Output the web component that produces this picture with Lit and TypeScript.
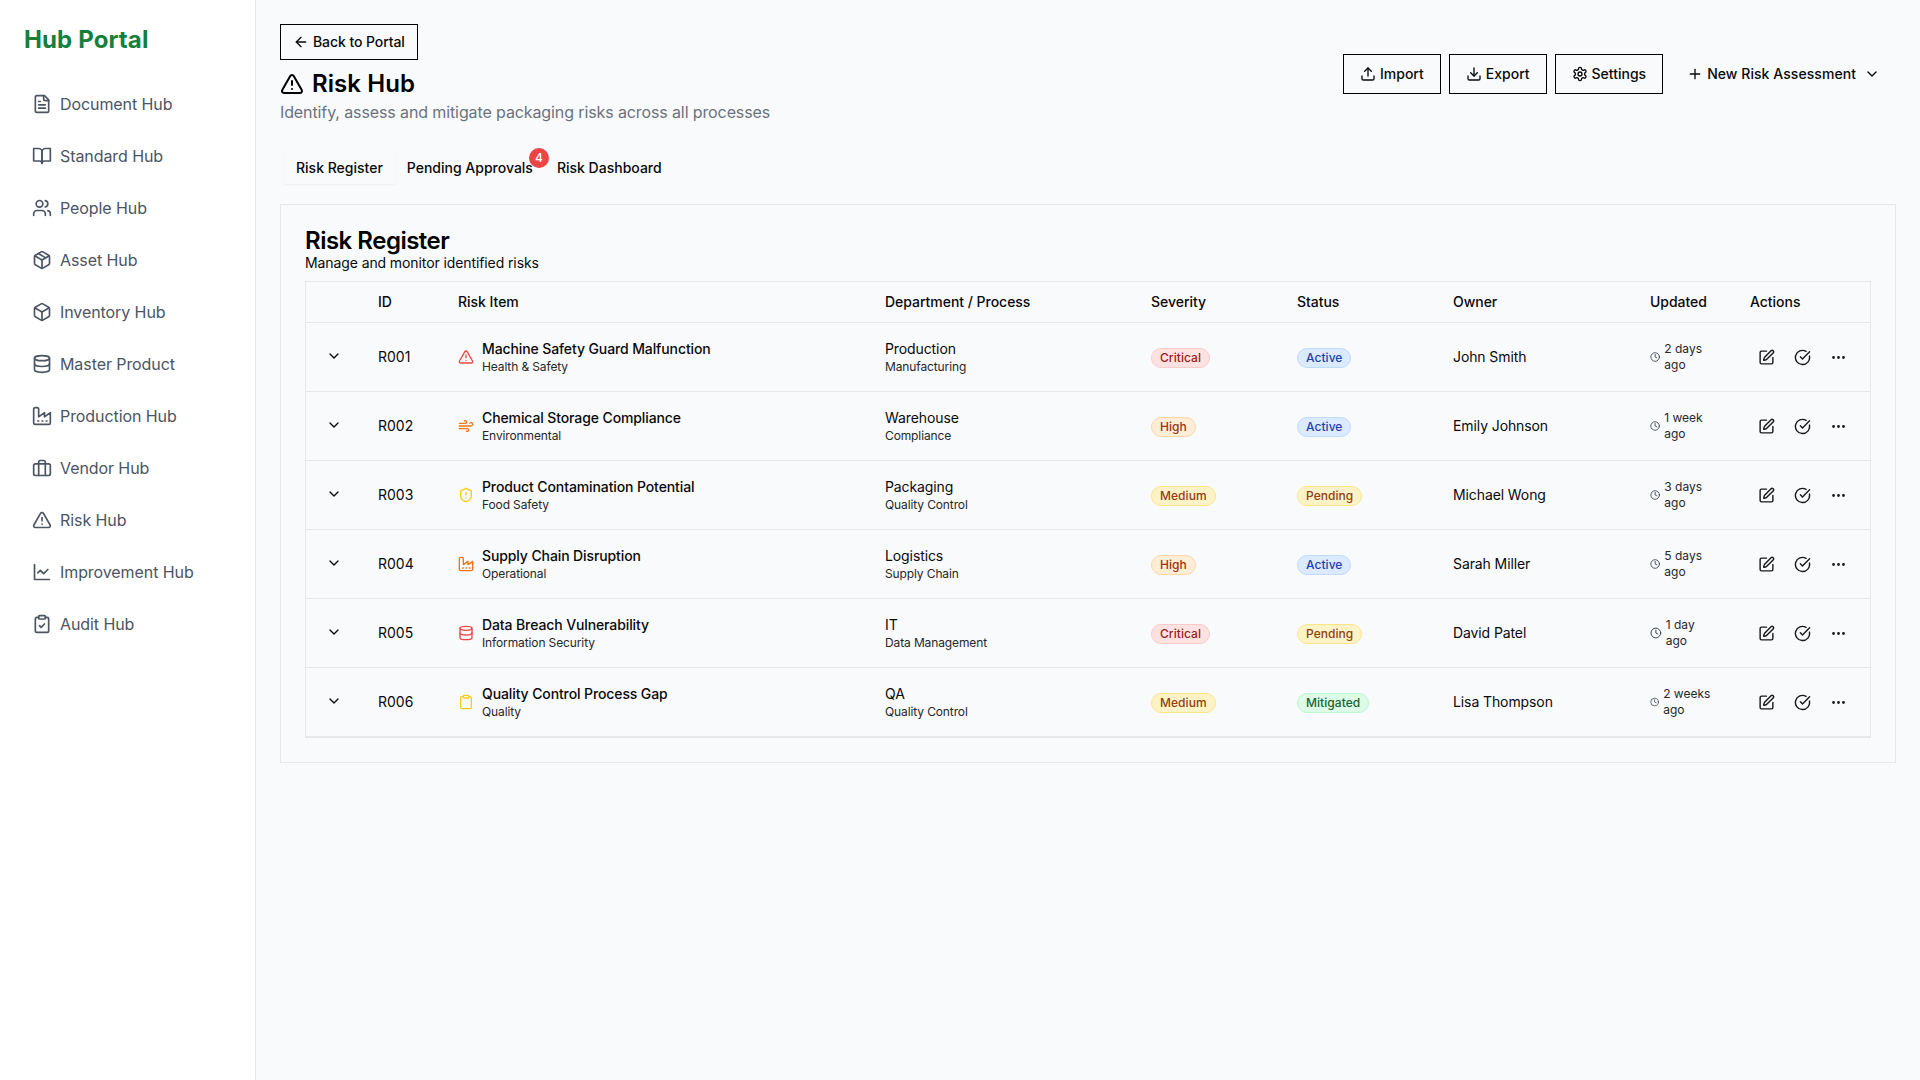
import { LitElement, html, css, svg } from "lit";
import { customElement } from "lit/decorators.js";

const icons: Record<string, unknown> = {
  file: svg`<path d="M15 2H6a2 2 0 0 0-2 2v16a2 2 0 0 0 2 2h12a2 2 0 0 0 2-2V7Z"/><path d="M14 2v4a2 2 0 0 0 2 2h4"/><path d="M10 9H8"/><path d="M16 13H8"/><path d="M16 17H8"/>`,
  book: svg`<path d="M2 3h6a4 4 0 0 1 4 4v14a3 3 0 0 0-3-3H2z"/><path d="M22 3h-6a4 4 0 0 0-4 4v14a3 3 0 0 1 3-3h7z"/>`,
  users: svg`<path d="M16 21v-2a4 4 0 0 0-4-4H6a4 4 0 0 0-4 4v2"/><circle cx="9" cy="7" r="4"/><path d="M22 21v-2a4 4 0 0 0-3-3.87"/><path d="M16 3.13a4 4 0 0 1 0 7.75"/>`,
  pack: svg`<path d="m7.5 4.27 9 5.15"/><path d="M21 8a2 2 0 0 0-1-1.73l-7-4a2 2 0 0 0-2 0l-7 4A2 2 0 0 0 3 8v8a2 2 0 0 0 1 1.73l7 4a2 2 0 0 0 2 0l7-4A2 2 0 0 0 21 16Z"/><path d="m3.3 7 8.7 5 8.7-5"/><path d="M12 22V12"/>`,
  box: svg`<path d="M21 8a2 2 0 0 0-1-1.73l-7-4a2 2 0 0 0-2 0l-7 4A2 2 0 0 0 3 8v8a2 2 0 0 0 1 1.73l7 4a2 2 0 0 0 2 0l7-4A2 2 0 0 0 21 16Z"/><path d="m3.3 7 8.7 5 8.7-5"/><path d="M12 22V12"/>`,
  db: svg`<ellipse cx="12" cy="5" rx="9" ry="3"/><path d="M3 5V19A9 3 0 0 0 21 19V5"/><path d="M3 12A9 3 0 0 0 21 12"/>`,
  factory: svg`<path d="M2 20a2 2 0 0 0 2 2h16a2 2 0 0 0 2-2V8l-7 5V8l-7 5V4a2 2 0 0 0-2-2H4a2 2 0 0 0-2 2Z"/><path d="M17 18h1"/><path d="M12 18h1"/><path d="M7 18h1"/>`,
  case: svg`<rect x="2" y="7" width="20" height="14" rx="2" ry="2"/><path d="M16 21V5a2 2 0 0 0-2-2h-4a2 2 0 0 0-2 2v16"/>`,
  alert: svg`<path d="m21.73 18-8-14a2 2 0 0 0-3.48 0l-8 14A2 2 0 0 0 4 21h16a2 2 0 0 0 1.73-3"/><path d="M12 9v4"/><path d="M12 17h.01"/>`,
  chart: svg`<path d="M3 3v18h18"/><path d="m19 9-5 5-4-4-3 3"/>`,
  audit: svg`<rect x="8" y="2" width="8" height="4" rx="1" ry="1"/><path d="M16 4h2a2 2 0 0 1 2 2v14a2 2 0 0 1-2 2H6a2 2 0 0 1-2-2V6a2 2 0 0 1 2-2h2"/><path d="m9 14 2 2 4-4"/>`,
  clip: svg`<rect x="8" y="2" width="8" height="4" rx="1" ry="1"/><path d="M16 4h2a2 2 0 0 1 2 2v14a2 2 0 0 1-2 2H6a2 2 0 0 1-2-2V6a2 2 0 0 1 2-2h2"/>`,
  back: svg`<path d="m12 19-7-7 7-7"/><path d="M19 12H5"/>`,
  upload: svg`<path d="M21 15v4a2 2 0 0 1-2 2H5a2 2 0 0 1-2-2v-4"/><polyline points="17 8 12 3 7 8"/><line x1="12" x2="12" y1="3" y2="15"/>`,
  download: svg`<path d="M21 15v4a2 2 0 0 1-2 2H5a2 2 0 0 1-2-2v-4"/><polyline points="7 10 12 15 17 10"/><line x1="12" x2="12" y1="15" y2="3"/>`,
  gear: svg`<path d="M12.22 2h-.44a2 2 0 0 0-2 2v.18a2 2 0 0 1-1 1.73l-.43.25a2 2 0 0 1-2 0l-.15-.08a2 2 0 0 0-2.73.73l-.22.38a2 2 0 0 0 .73 2.73l.15.1a2 2 0 0 1 1 1.72v.51a2 2 0 0 1-1 1.74l-.15.09a2 2 0 0 0-.73 2.73l.22.38a2 2 0 0 0 2.73.73l.15-.08a2 2 0 0 1 2 0l.43.25a2 2 0 0 1 1 1.73V20a2 2 0 0 0 2 2h.44a2 2 0 0 0 2-2v-.18a2 2 0 0 1 1-1.73l.43-.25a2 2 0 0 1 2 0l.15.08a2 2 0 0 0 2.73-.73l.22-.39a2 2 0 0 0-.73-2.73l-.15-.08a2 2 0 0 1-1-1.74v-.5a2 2 0 0 1 1-1.74l.15-.09a2 2 0 0 0 .73-2.73l-.22-.38a2 2 0 0 0-2.73-.73l-.15.08a2 2 0 0 1-2 0l-.43-.25a2 2 0 0 1-1-1.73V4a2 2 0 0 0-2-2z"/><circle cx="12" cy="12" r="3"/>`,
  plus: svg`<path d="M5 12h14"/><path d="M12 5v14"/>`,
  chevron: svg`<path d="m6 9 6 6 6-6"/>`,
  wind: svg`<path d="M17.7 7.7a2.5 2.5 0 1 1 1.8 4.3H2"/><path d="M9.6 4.6A2 2 0 1 1 11 8H2"/><path d="M12.6 19.4A2 2 0 1 0 14 16H2"/>`,
  shield: svg`<path d="M20 13c0 5-3.5 7.5-7.66 8.95a1 1 0 0 1-.67-.01C7.5 20.5 4 18 4 13V6a1 1 0 0 1 1-1c2 0 4.5-1.2 6.24-2.72a1.17 1.17 0 0 1 1.52 0C14.51 3.81 17 5 19 5a1 1 0 0 1 1 1z"/><path d="M12 8v4"/><path d="M12 16h.01"/>`,
  clock: svg`<circle cx="12" cy="12" r="10"/><polyline points="12 6 12 12 16 14"/>`,
  edit: svg`<path d="M12 3H5a2 2 0 0 0-2 2v14a2 2 0 0 0 2 2h14a2 2 0 0 0 2-2v-7"/><path d="M18.375 2.625a1 1 0 0 1 3 3l-9.013 9.014a2 2 0 0 1-.853.505l-2.873.84a.5.5 0 0 1-.62-.62l.84-2.873a2 2 0 0 1 .506-.852z"/>`,
  check: svg`<path d="M21.801 10A10 10 0 1 1 17 3.335"/><path d="m9 11 3 3L22 4"/>`,
  dots: svg`<circle cx="12" cy="12" r="1"/><circle cx="19" cy="12" r="1"/><circle cx="5" cy="12" r="1"/>`,
};

const icon = (name: string, cls = "") =>
  html`<svg class="ic ${cls}" viewBox="0 0 24 24" fill="none" stroke="currentColor" stroke-width="2" stroke-linecap="round" stroke-linejoin="round">${icons[name]}</svg>`;

const navItems = [
  ["file", "Document Hub"],
  ["book", "Standard Hub"],
  ["users", "People Hub"],
  ["pack", "Asset Hub"],
  ["box", "Inventory Hub"],
  ["db", "Master Product"],
  ["factory", "Production Hub"],
  ["case", "Vendor Hub"],
  ["alert", "Risk Hub"],
  ["chart", "Improvement Hub"],
  ["audit", "Audit Hub"],
];

const risks = [
  { id: "R001", icon: "alert", tone: "red", name: "Machine Safety Guard Malfunction", cat: "Health & Safety", dept: "Production", proc: "Manufacturing", sev: "Critical", status: "Active", owner: "John Smith", updated: "2 days ago" },
  { id: "R002", icon: "wind", tone: "orange", name: "Chemical Storage Compliance", cat: "Environmental", dept: "Warehouse", proc: "Compliance", sev: "High", status: "Active", owner: "Emily Johnson", updated: "1 week ago" },
  { id: "R003", icon: "shield", tone: "yellow", name: "Product Contamination Potential", cat: "Food Safety", dept: "Packaging", proc: "Quality Control", sev: "Medium", status: "Pending", owner: "Michael Wong", updated: "3 days ago" },
  { id: "R004", icon: "factory", tone: "orange", name: "Supply Chain Disruption", cat: "Operational", dept: "Logistics", proc: "Supply Chain", sev: "High", status: "Active", owner: "Sarah Miller", updated: "5 days ago" },
  { id: "R005", icon: "db", tone: "red", name: "Data Breach Vulnerability", cat: "Information Security", dept: "IT", proc: "Data Management", sev: "Critical", status: "Pending", owner: "David Patel", updated: "1 day ago" },
  { id: "R006", icon: "clip", tone: "yellow", name: "Quality Control Process Gap", cat: "Quality", dept: "QA", proc: "Quality Control", sev: "Medium", status: "Mitigated", owner: "Lisa Thompson", updated: "2 weeks ago" },
];

@customElement("app-root")
export class AppRoot extends LitElement {
  static styles = css`
    :host {
      display: block;
      font-family: Inter, "Liberation Sans", sans-serif;
      color: #09090b;
      font-size: 14px;
      line-height: 20px;
      letter-spacing: -0.1px;
    }
    * {
      box-sizing: border-box;
    }
    .page {
      display: flex;
      min-height: 1080px;
      background: #f9fafb;
    }
    .ic {
      width: 16px;
      height: 16px;
      display: block;
    }
    .ic.s20 {
      width: 20px;
      height: 20px;
      flex-shrink: 0;
    }
    .ic.s24 {
      width: 24px;
      height: 24px;
    }
    .ic.s12 {
      width: 12px;
      height: 12px;
      color: #374151;
    }
    aside {
      width: 256px;
      flex-shrink: 0;
      background: #fff;
      border-right: 1px solid #e5e7eb;
      padding: 24px;
    }
    .logo {
      font-size: 24px;
      line-height: 32px;
      font-weight: 700;
      letter-spacing: 0.12px;
      color: #15803d;
      margin-bottom: 24px;
    }
    nav {
      display: flex;
      flex-direction: column;
      gap: 4px;
    }
    nav a {
      display: flex;
      align-items: center;
      gap: 8px;
      height: 48px;
      padding: 0 8px;
      font-size: 16px;
      line-height: 24px;
      letter-spacing: -0.08px;
      color: #4b5563;
    }
    main {
      flex: 1;
      min-width: 0;
      padding: 24px;
    }
    .top {
      display: flex;
      justify-content: space-between;
      align-items: center;
      margin-bottom: 24px;
    }
    .btn {
      display: inline-flex;
      align-items: center;
      gap: 4px;
      height: 40px;
      padding: 0 16px;
      border: 1px solid #000;
      font-weight: 500;
      letter-spacing: 0;
      background: transparent;
    }
    .btn.back {
      height: 36px;
      padding: 0 12px;
      margin-bottom: 8px;
      letter-spacing: -0.08px;
    }
    .btn.plain {
      border: 0;
      letter-spacing: 0.06px;
    }
    .btn.plain .ic:last-child {
      margin-left: 4px;
    }
    h1 {
      display: flex;
      align-items: center;
      gap: 8px;
      margin: 0;
      font-size: 24px;
      line-height: 32px;
      font-weight: 600;
      letter-spacing: 0.08px;
      color: #000;
    }
    .lead {
      font-size: 16px;
      line-height: 24px;
      letter-spacing: -0.11px;
      color: #6b7280;
    }
    .actions {
      display: flex;
      gap: 8px;
    }
    .tabs {
      display: flex;
      padding: 4px;
      height: 40px;
      margin-bottom: 16px;
    }
    .tab {
      position: relative;
      height: 32px;
      padding: 0 12px;
      display: flex;
      align-items: center;
      font-weight: 500;
      letter-spacing: 0;
    }
    .tab.on {
      background: #f9fafb;
      box-shadow: 0 1px 2px rgba(0, 0, 0, 0.05);
    }
    .count {
      position: absolute;
      top: -4px;
      right: -4px;
      width: 20px;
      height: 20px;
      border-radius: 50%;
      background: #ef4444;
      color: #fff;
      font-size: 12px;
      line-height: 20px;
      text-align: center;
    }
    .card {
      border: 1px solid #e5e7eb;
      padding: 24px;
    }
    h2 {
      margin: 0;
      font-size: 24px;
      line-height: 24px;
      font-weight: 600;
      letter-spacing: -0.5px;
      color: #000;
    }
    .card-sub {
      margin-bottom: 8px;
    }
    .wrap {
      border: 1px solid #e5e7eb;
    }
    table {
      width: 100%;
      table-layout: fixed;
      border-collapse: separate;
      border-spacing: 0;
    }
    .c1 { width: 56px; }
    .c2 { width: 80px; }
    .c3 { width: 427px; }
    .c4 { width: 266px; }
    .c5 { width: 146px; }
    .c6 { width: 156px; }
    .c7 { width: 197px; }
    .c8 { width: 100px; }
    .c9 { width: 136px; }
    th {
      height: 41px;
      padding: 0 16px;
      text-align: left;
      font-weight: 450;
      letter-spacing: -0.03px;
      border-bottom: 1px solid #e5e7eb;
    }
    td {
      height: 69px;
      padding: 16px;
      border-bottom: 1px solid #e5e7eb;
      vertical-align: middle;
    }
    td.id {
      letter-spacing: 0;
    }
    .toggle {
      width: 24px;
      height: 24px;
      margin-top: -2px;
      display: flex;
      align-items: center;
      justify-content: center;
    }
    .item {
      display: flex;
      align-items: center;
      gap: 8px;
    }
    .name {
      font-weight: 450;
      letter-spacing: -0.11px;
    }
    .sub {
      font-size: 12px;
      line-height: 16px;
      letter-spacing: -0.12px;
      color: #27272a;
    }
    .red { color: #ef4444; }
    .orange { color: #f97316; }
    .yellow { color: #facc15; }
    .badge {
      display: inline-block;
      vertical-align: middle;
      padding: 1px 8px;
      border: 1px solid;
      border-radius: 999px;
      font-size: 12px;
      line-height: 16px;
      font-weight: 500;
      letter-spacing: 0.05px;
    }
    .Critical { background: #fee2e2; color: #991b1b; border-color: #fecaca; }
    .High { background: #ffedd5; color: #9a3412; border-color: #fed7aa; }
    .Medium, .Pending { background: #fef3c7; color: #92400e; border-color: #fde68a; }
    .Active { background: #dbeafe; color: #1e40af; border-color: #bfdbfe; }
    .Mitigated { background: #dcfce7; color: #166534; border-color: #bbf7d0; }
    .when {
      display: flex;
      align-items: center;
      gap: 4px;
      font-size: 12px;
      line-height: 16px;
      letter-spacing: 0;
      color: #27272a;
    }
    .row-btns {
      display: flex;
      gap: 4px;
    }
    .row-btns span {
      width: 32px;
      height: 32px;
      display: flex;
      align-items: center;
      justify-content: center;
      color: #18181b;
    }
    .row-btns .ic {
      width: 17px;
      height: 17px;
    }
  `;

  render() {
    return html`
      <div class="page">
        <aside>
          <div class="logo">Hub Portal</div>
          <nav>
            ${navItems.map(([ic, label]) => html`<a>${icon(ic, "s20")}${label}</a>`)}
          </nav>
        </aside>
        <main>
          <div class="top">
            <div>
              <div class="btn back">${icon("back")}Back to Portal</div>
              <h1>${icon("alert", "s24")}Risk Hub</h1>
              <div class="lead">Identify, assess and mitigate packaging risks across all processes</div>
            </div>
            <div class="actions">
              <div class="btn">${icon("upload")}Import</div>
              <div class="btn">${icon("download")}Export</div>
              <div class="btn">${icon("gear")}Settings</div>
              <div class="btn plain">${icon("plus")}New Risk Assessment${icon("chevron")}</div>
            </div>
          </div>
          <div class="tabs">
            <div class="tab on">Risk Register</div>
            <div class="tab">Pending Approvals<span class="count">4</span></div>
            <div class="tab">Risk Dashboard</div>
          </div>
          <section class="card">
            <h2>Risk Register</h2>
            <div class="card-sub">Manage and monitor identified risks</div>
            <div class="wrap">
              <table>
                <colgroup>
                  ${[1, 2, 3, 4, 5, 6, 7, 8, 9].map((n) => html`<col class="c${n}" />`)}
                </colgroup>
                <thead>
                  <tr>
                    <th></th>
                    <th>ID</th>
                    <th>Risk Item</th>
                    <th>Department / Process</th>
                    <th>Severity</th>
                    <th>Status</th>
                    <th>Owner</th>
                    <th>Updated</th>
                    <th>Actions</th>
                  </tr>
                </thead>
                <tbody>
                  ${risks.map(
                    (r) => html`
                      <tr>
                        <td><div class="toggle">${icon("chevron")}</div></td>
                        <td class="id">${r.id}</td>
                        <td>
                          <div class="item">
                            <span class=${r.tone}>${icon(r.icon)}</span>
                            <div>
                              <div class="name">${r.name}</div>
                              <div class="sub">${r.cat}</div>
                            </div>
                          </div>
                        </td>
                        <td>
                          <div>${r.dept}</div>
                          <div class="sub">${r.proc}</div>
                        </td>
                        <td><span class="badge ${r.sev}">${r.sev}</span></td>
                        <td><span class="badge ${r.status}">${r.status}</span></td>
                        <td>${r.owner}</td>
                        <td>
                          <div class="when">${icon("clock", "s12")}<span>${r.updated}</span></div>
                        </td>
                        <td>
                          <div class="row-btns">
                            <span>${icon("edit")}</span>
                            <span>${icon("check")}</span>
                            <span>${icon("dots")}</span>
                          </div>
                        </td>
                      </tr>
                    `
                  )}
                </tbody>
              </table>
            </div>
          </section>
        </main>
      </div>
    `;
  }
}
